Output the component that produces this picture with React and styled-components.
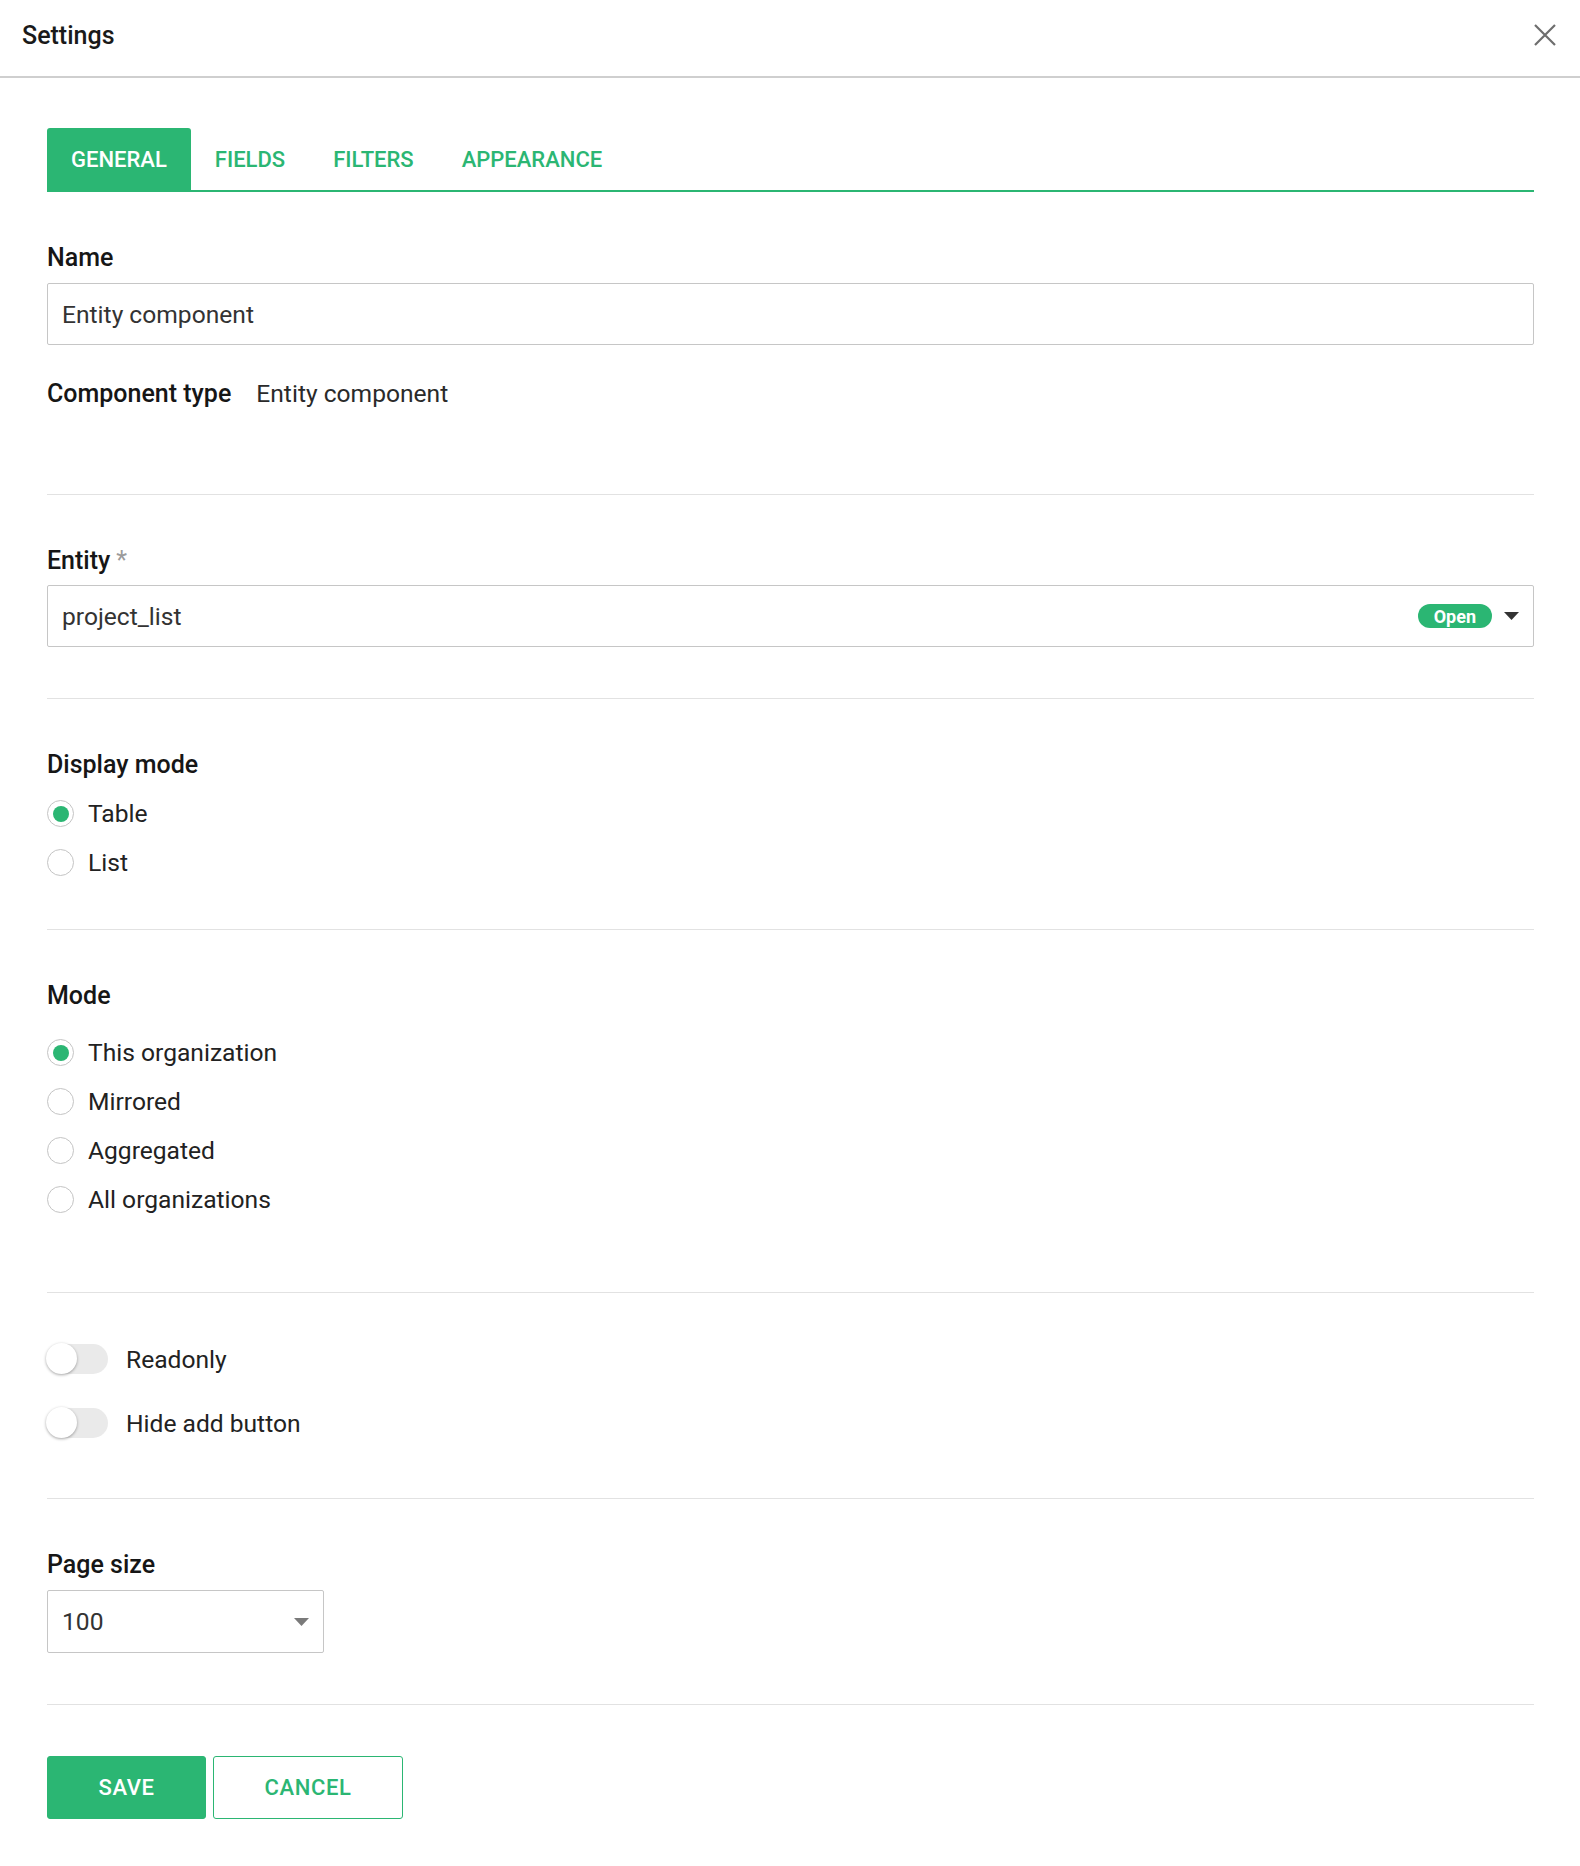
import React, { useState } from "react";
import styled, { createGlobalStyle } from "styled-components";

const green = "#2bb673";
const fontFamily = `Roboto, "Liberation Sans", Arial, sans-serif`;

const GlobalStyle = createGlobalStyle`
    html, body {
        margin: 0;
        padding: 0;
        background: #ffffff;
    }
    * {
        box-sizing: border-box;
    }
`;

const Page = styled.div`
    width: 1580px;
    min-height: 1866px;
    background: #ffffff;
    font-family: ${fontFamily};
    color: #222;
`;

const Header = styled.header`
    height: 78px;
    display: flex;
    align-items: center;
    justify-content: space-between;
    padding: 0 23px 6px 22px;
    border-bottom: 2px solid #cfcfcf;
    h1 {
        margin: 0;
        font-size: 25px;
        font-weight: 500;
        color: #1a1a1a;
    }
`;

const CloseButton = styled.button`
    width: 24px;
    height: 24px;
    padding: 0;
    border: none;
    background: none;
    display: flex;
    align-items: center;
    justify-content: center;
    cursor: pointer;
`;

const Body = styled.main`
    padding: 0 46px 0 47px;
`;

const TabBar = styled.nav`
    margin-top: 50px;
    height: 64px;
    display: flex;
    border-bottom: 2px solid ${green};
`;

const Tab = styled.button`
    height: 62px;
    padding: 0 24px;
    border: none;
    border-radius: 3px 3px 0 0;
    font-family: ${fontFamily};
    font-size: 22px;
    font-weight: 500;
    text-transform: uppercase;
    cursor: pointer;
    background: ${props => (props.$active ? green : "transparent")};
    color: ${props => (props.$active ? "#ffffff" : green)};
`;

const Section = styled.section`
    padding-top: ${props => props.$top || 51}px;
    padding-bottom: ${props => props.$bottom || 51}px;
    border-bottom: ${props => (props.$last ? "none" : "1px solid #e2e2e2")};
`;

const Label = styled.div`
    font-size: 25px;
    line-height: 30px;
    font-weight: 500;
    color: #161616;
    margin-bottom: ${props => props.$gap || 0}px;
    span {
        margin-left: 6px;
        font-weight: 400;
        color: #9b9b9b;
    }
`;

const TextInput = styled.div`
    height: ${props => props.$height || 62}px;
    width: ${props => (props.$width ? `${props.$width}px` : "100%")};
    display: flex;
    align-items: center;
    gap: 12px;
    padding: 0 14px;
    border: 1px solid #c6c6c6;
    border-radius: 2px;
    font-size: 24.6px;
    color: #333;
    .value {
        flex: 1;
    }
`;

const InfoRow = styled.div`
    margin-top: 34px;
    display: flex;
    gap: 25px;
    font-size: 25px;
    line-height: 30px;
    strong {
        font-weight: 500;
        color: #161616;
    }
    span {
        font-size: 24.6px;
        color: #2a2a2a;
    }
`;

const Badge = styled.span`
    height: 24px;
    padding: 0 16px;
    display: inline-flex;
    align-items: center;
    border-radius: 12px;
    background: ${green};
    color: #ffffff;
    font-size: 18px;
    font-weight: 700;
`;

const RadioGroup = styled.div`
    margin-top: ${props => props.$gap}px;
    display: flex;
    flex-direction: column;
`;

const RadioRow = styled.label`
    height: 49px;
    display: flex;
    align-items: center;
    gap: 14px;
    font-size: 24.6px;
    color: #222;
    cursor: pointer;
`;

const RadioCircle = styled.span`
    width: 27px;
    height: 27px;
    border-radius: 50%;
    border: 1.5px solid #c4c4c4;
    display: flex;
    align-items: center;
    justify-content: center;
    &::after {
        content: "";
        width: 16px;
        height: 16px;
        border-radius: 50%;
        background: ${props => (props.$checked ? green : "transparent")};
    }
`;

const ToggleList = styled.div`
    display: flex;
    flex-direction: column;
    gap: 24px;
`;

const ToggleRow = styled.label`
    height: 40px;
    display: flex;
    align-items: center;
    gap: 18px;
    font-size: 24.6px;
    color: #222;
    cursor: pointer;
`;

const Track = styled.span`
    position: relative;
    width: 61px;
    height: 30px;
    border-radius: 15px;
    background: ${props => (props.$on ? "#9fdcbf" : "#eaeaea")};
`;

const Thumb = styled.span`
    position: absolute;
    top: -1px;
    left: ${props => (props.$on ? "31px" : "-1px")};
    width: 31px;
    height: 31px;
    border-radius: 50%;
    background: ${props => (props.$on ? green : "#ffffff")};
    box-shadow: 0 1px 3px rgba(0, 0, 0, 0.35);
`;

const ButtonRow = styled.div`
    display: flex;
    gap: 7px;
`;

const Button = styled.button`
    height: 63px;
    width: ${props => props.$width}px;
    border-radius: 3px;
    font-family: ${fontFamily};
    font-size: 22px;
    font-weight: 500;
    letter-spacing: 0.6px;
    text-transform: uppercase;
    cursor: pointer;
    border: 1.5px solid ${green};
    background: ${props => (props.$primary ? green : "#ffffff")};
    color: ${props => (props.$primary ? "#ffffff" : green)};
`;

const Caret = ({ color = "#333", width = 15, height = 8 }) => (
    <svg width={width} height={height} viewBox="0 0 15 8">
        <path d="M0 0 L15 0 L7.5 8 Z" fill={color} />
    </svg>
);

const tabs = ["General", "Fields", "Filters", "Appearance"];
const modes = ["This organization", "Mirrored", "Aggregated", "All organizations"];

export default function App() {
    const [tab, setTab] = useState("General");
    const [display, setDisplay] = useState("Table");
    const [mode, setMode] = useState("This organization");
    const [toggles, setToggles] = useState({ readonly: false, hideAdd: false });

    const flip = key => setToggles({ ...toggles, [key]: !toggles[key] });

    return (
        <Page>
            <GlobalStyle />
            <Header>
                <h1>Settings</h1>
                <CloseButton aria-label="Close">
                    <svg width="22" height="22" viewBox="0 0 22 22">
                        <path d="M1 1 L21 21 M21 1 L1 21" stroke="#6e6e6e" strokeWidth="2.2" />
                    </svg>
                </CloseButton>
            </Header>
            <Body>
                <TabBar>
                    {tabs.map(t => (
                        <Tab key={t} $active={tab === t} onClick={() => setTab(t)}>
                            {t}
                        </Tab>
                    ))}
                </TabBar>

                <Section $bottom={85}>
                    <Label $gap={10}>Name</Label>
                    <TextInput>
                        <span className="value">Entity component</span>
                    </TextInput>
                    <InfoRow>
                        <strong>Component type</strong>
                        <span>Entity component</span>
                    </InfoRow>
                </Section>

                <Section>
                    <Label $gap={9}>
                        Entity<span>*</span>
                    </Label>
                    <TextInput>
                        <span className="value">project_list</span>
                        <Badge>Open</Badge>
                        <Caret />
                    </TextInput>
                </Section>

                <Section $bottom={42}>
                    <Label>Display mode</Label>
                    <RadioGroup $gap={9}>
                        {["Table", "List"].map(d => (
                            <RadioRow key={d} onClick={() => setDisplay(d)}>
                                <RadioCircle $checked={display === d} />
                                {d}
                            </RadioRow>
                        ))}
                    </RadioGroup>
                </Section>

                <Section $bottom={68}>
                    <Label>Mode</Label>
                    <RadioGroup $gap={17}>
                        {modes.map(m => (
                            <RadioRow key={m} onClick={() => setMode(m)}>
                                <RadioCircle $checked={mode === m} />
                                {m}
                            </RadioRow>
                        ))}
                    </RadioGroup>
                </Section>

                <Section $top={46} $bottom={55}>
                    <ToggleList>
                        <ToggleRow onClick={() => flip("readonly")}>
                            <Track $on={toggles.readonly}>
                                <Thumb $on={toggles.readonly} />
                            </Track>
                            Readonly
                        </ToggleRow>
                        <ToggleRow onClick={() => flip("hideAdd")}>
                            <Track $on={toggles.hideAdd}>
                                <Thumb $on={toggles.hideAdd} />
                            </Track>
                            Hide add button
                        </ToggleRow>
                    </ToggleList>
                </Section>

                <Section>
                    <Label $gap={10}>Page size</Label>
                    <TextInput $width={277} $height={63}>
                        <span className="value">100</span>
                        <Caret color="#7a7a7a" />
                    </TextInput>
                </Section>

                <Section $last>
                    <ButtonRow>
                        <Button $primary $width={159}>Save</Button>
                        <Button $width={190}>Cancel</Button>
                    </ButtonRow>
                </Section>
            </Body>
        </Page>
    );
}
